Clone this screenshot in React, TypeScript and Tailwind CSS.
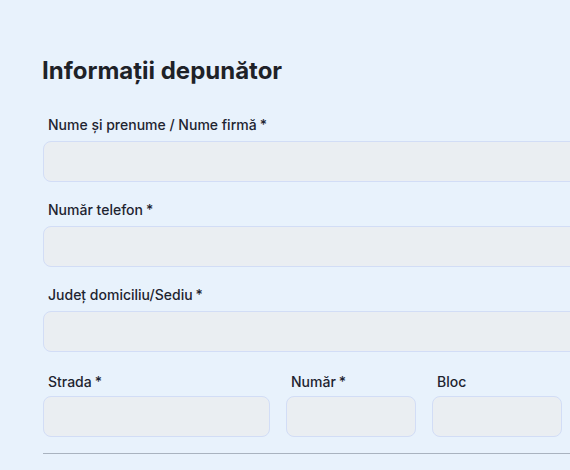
import React from 'react';

function Field({
  label,
  required = true,
  className = '',
  tight = false,
}: {
  label: string;
  required?: boolean;
  className?: string;
  tight?: boolean;
}) {
  return (
    <div className={`flex flex-col ${className}`}>
      <label
        className={`ml-[5px] ${tight ? 'mb-1' : 'mb-[6px]'} text-[14px] leading-5 font-medium text-[#1e2430]`}
      >
        {label}
        {required && <span className="ml-[3px]">*</span>}
      </label>
      <div className="h-[41px] rounded-lg border border-[#d2ddf6] bg-[#eaeef2]" />
    </div>
  );
}

export default function App() {
  return (
    <div
      className="w-[570px] h-[470px] overflow-hidden bg-[#e8f2fc]"
      style={{ fontFamily: 'Inter, "Noto Sans", sans-serif' }}
    >
      <div className="w-[700px] pl-[43px] pt-[55px]">
        <h2 className="-ml-px text-[24px] leading-8 font-bold text-[#1e2228]">Informații depunător</h2>
        <div className="mt-[28px] flex flex-col gap-[18px]">
          <Field label="Nume și prenume / Nume firmă" />
          <Field label="Număr telefon" />
          <Field label="Județ domiciliu/Sediu" />
          <div className="mt-[2px] flex gap-4">
            <Field label="Strada" tight className="w-[227px] shrink-0" />
            <Field label="Număr" tight className="w-[130px] shrink-0" />
            <Field label="Bloc" tight required={false} className="w-[130px] shrink-0" />
          </div>
        </div>
        <div className="mt-4 h-px bg-[#a9b3bf]" />
      </div>
    </div>
  );
}
